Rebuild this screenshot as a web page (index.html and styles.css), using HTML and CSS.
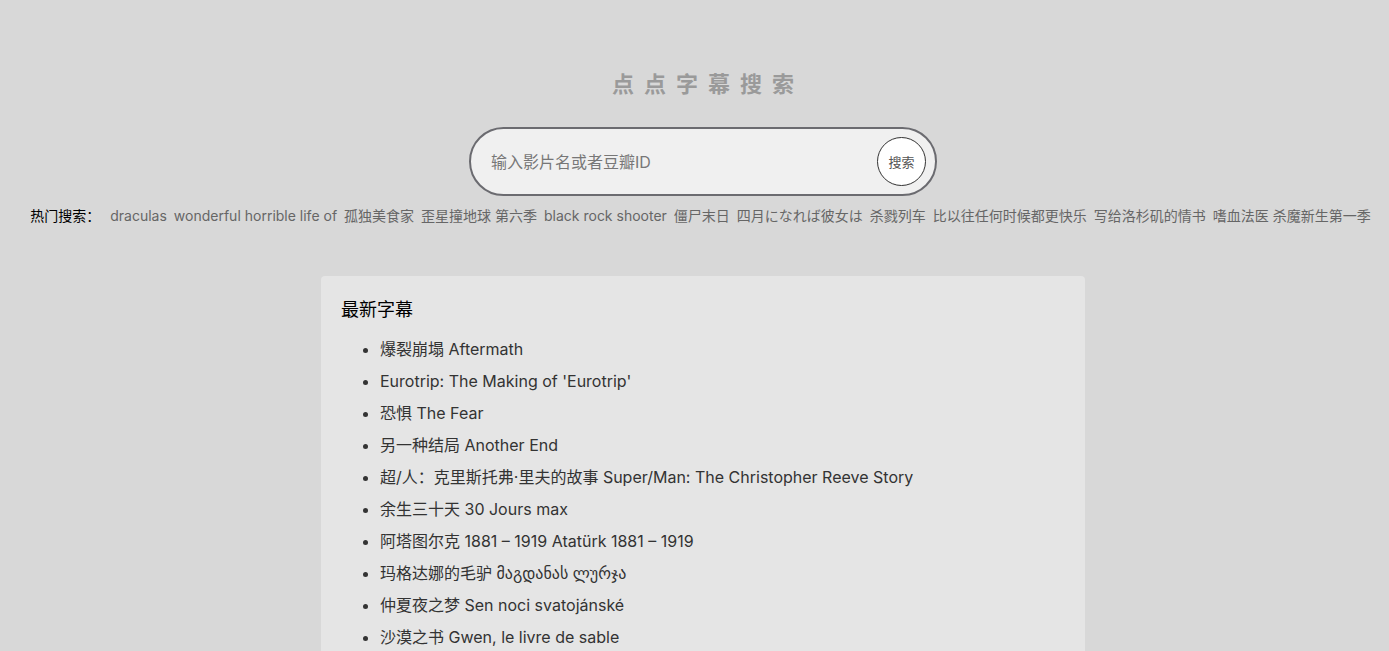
FILE: index.html
```html
<!DOCTYPE html>
<html lang="zh-CN">
<head>
<meta charset="utf-8">
<title>点点字幕搜索</title>
<link rel="stylesheet" href="styles.css">
</head>
<body>
<div class="page">
  <h1 class="title">点点字幕搜索</h1>
  <form class="search">
    <input class="search-input" type="text" placeholder="输入影片名或者豆瓣ID">
    <button class="search-btn" type="button">搜索</button>
  </form>
  <div class="hot">
    <span class="hot-label">热门搜索：</span>
    <a class="hot-item">draculas</a>
    <a class="hot-item">wonderful horrible life of</a>
    <a class="hot-item">孤独美食家</a>
    <a class="hot-item">歪星撞地球 第六季</a>
    <a class="hot-item">black rock shooter</a>
    <a class="hot-item">僵尸末日</a>
    <a class="hot-item">四月になれば彼女は</a>
    <a class="hot-item">杀戮列车</a>
    <a class="hot-item">比以往任何时候都更快乐</a>
    <a class="hot-item">写给洛杉矶的情书</a>
    <a class="hot-item">嗜血法医 杀魔新生第一季</a>
  </div>
  <section class="card">
    <h2 class="card-title">最新字幕</h2>
    <ul class="list">
      <li>爆裂崩塌 Aftermath</li>
      <li>Eurotrip: The Making of 'Eurotrip'</li>
      <li>恐惧 The Fear</li>
      <li>另一种结局 Another End</li>
      <li>超/人：克里斯托弗·里夫的故事 Super/Man: The Christopher Reeve Story</li>
      <li>余生三十天 30 Jours max</li>
      <li>阿塔图尔克 1881 – 1919 Atatürk 1881 – 1919</li>
      <li>玛格达娜的毛驴 მაგდანას ლურჯა</li>
      <li>仲夏夜之梦 Sen noci svatojánské</li>
      <li>沙漠之书 Gwen, le livre de sable</li>
    </ul>
  </section>
</div>
</body>
</html>
```
FILE: styles.css
```css
html, body {
  margin: 0;
  padding: 0;
  background: #d8d8d8;
}
body {
  font-family: Inter, "Noto Sans CJK SC", "DejaVu Sans", sans-serif;
  color: #333;
}
.page {
  padding-left: 17px;
  padding-top: 1px;
  display: flex;
  flex-direction: column;
  align-items: center;
}
.title {
  margin: 67px 0 0 0;
  font-size: 22px;
  line-height: 32px;
  letter-spacing: 10px;
  padding-left: 10px;
  color: #9a9a9a;
  font-weight: bold;
}
.search {
  margin-top: 27px;
  width: 468px;
  height: 69px;
  box-sizing: border-box;
  border: 2px solid #6b6b70;
  border-radius: 35px;
  background: #f0f0f0;
  display: flex;
  align-items: center;
  padding: 0 9px 0 20px;
}
.search-input {
  flex: 1;
  border: none;
  background: transparent;
  outline: none;
  font-family: inherit;
  font-size: 16px;
  color: #333;
  padding: 0;
}
.search-input::placeholder {
  color: #777;
}
.search-btn {
  width: 49px;
  height: 49px;
  border-radius: 50%;
  border: 1px solid #333;
  background: #fff;
  font-family: inherit;
  font-size: 13px;
  color: #555;
  padding: 0;
}
.hot {
  margin-top: 11px;
  display: flex;
  white-space: nowrap;
  gap: 7px;
  font-size: 14px;
  line-height: 18px;
  margin-left: -5px;
}
.hot-label {
  color: #000;
  margin-right: 3px;
}
.hot-item {
  color: #666;
}
.card {
  margin-top: 51px;
  width: 764px;
  box-sizing: border-box;
  background: #e5e5e5;
  border-radius: 4px;
  padding: 21px 20px 10px 20px;
}
.card-title {
  margin: 0;
  font-size: 18px;
  line-height: 25px;
  font-weight: normal;
  color: #000;
}
.list {
  margin: 11px 0 0 0;
  padding-left: 39px;
  font-size: 16px;
  line-height: 32px;
  color: #333;
}
```
